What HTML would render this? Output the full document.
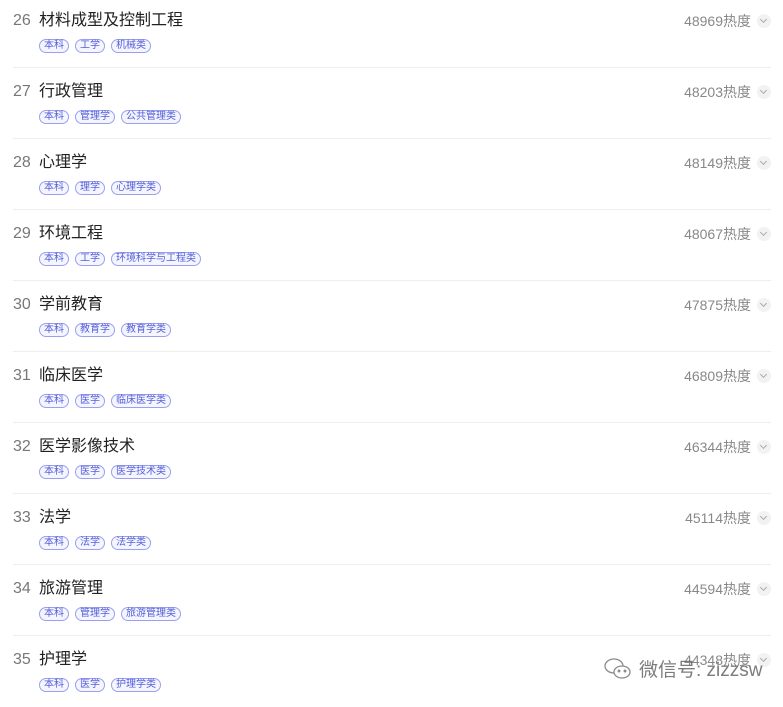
<!DOCTYPE html><html><head><meta charset="utf-8"><style>
body{margin:0;width:783px;height:701px;background:#fff;overflow:hidden;font-family:"Liberation Sans","Noto Sans CJK SC",sans-serif;position:relative}
.row{position:absolute;left:13px;width:758px;height:68px;border-bottom:1px solid #eee;box-sizing:border-box}
.num{position:absolute;left:0;top:10px;font-size:16px;line-height:22px;color:#777}
.t{position:absolute;left:26px;top:10px;font-size:16px;line-height:22px;color:#222}
.h{position:absolute;right:20px;top:11px;font-size:14px;line-height:20px;color:#888}
.c{position:absolute;right:0;top:14px;width:14px;height:14px;border-radius:50%;background:#f2f2f2}
.c::after{content:"";position:absolute;left:4px;top:3px;width:4px;height:4px;border-right:1px solid #aaa;border-bottom:1px solid #aaa;transform:rotate(45deg)}
.tags{position:absolute;left:26px;top:39px;display:flex;gap:6px}
.tags span{font-size:10px;line-height:12px;color:#5560d8;border:1px solid #9aa0ee;background:#f4f5ff;border-radius:7px;padding:0 4px}
.wm{position:absolute;left:603px;top:655px;font-size:19px;color:#666;opacity:.85;display:flex;align-items:center;gap:6px}
</style></head><body>
<div class="row" style="top:0"><span class="num">26</span><span class="t">材料成型及控制工程</span><span class="h">48969热度</span><span class="c"></span><div class="tags"><span>本科</span><span>工学</span><span>机械类</span></div></div>
<div class="row" style="top:71px"><span class="num">27</span><span class="t">行政管理</span><span class="h">48203热度</span><span class="c"></span><div class="tags"><span>本科</span><span>管理学</span><span>公共管理类</span></div></div>
<div class="row" style="top:142px"><span class="num">28</span><span class="t">心理学</span><span class="h">48149热度</span><span class="c"></span><div class="tags"><span>本科</span><span>理学</span><span>心理学类</span></div></div>
<div class="row" style="top:213px"><span class="num">29</span><span class="t">环境工程</span><span class="h">48067热度</span><span class="c"></span><div class="tags"><span>本科</span><span>工学</span><span>环境科学与工程类</span></div></div>
<div class="row" style="top:284px"><span class="num">30</span><span class="t">学前教育</span><span class="h">47875热度</span><span class="c"></span><div class="tags"><span>本科</span><span>教育学</span><span>教育学类</span></div></div>
<div class="row" style="top:355px"><span class="num">31</span><span class="t">临床医学</span><span class="h">46809热度</span><span class="c"></span><div class="tags"><span>本科</span><span>医学</span><span>临床医学类</span></div></div>
<div class="row" style="top:426px"><span class="num">32</span><span class="t">医学影像技术</span><span class="h">46344热度</span><span class="c"></span><div class="tags"><span>本科</span><span>医学</span><span>医学技术类</span></div></div>
<div class="row" style="top:497px"><span class="num">33</span><span class="t">法学</span><span class="h">45114热度</span><span class="c"></span><div class="tags"><span>本科</span><span>法学</span><span>法学类</span></div></div>
<div class="row" style="top:568px"><span class="num">34</span><span class="t">旅游管理</span><span class="h">44594热度</span><span class="c"></span><div class="tags"><span>本科</span><span>管理学</span><span>旅游管理类</span></div></div>
<div class="row" style="top:639px;border:none"><span class="num">35</span><span class="t">护理学</span><span class="h">44348热度</span><span class="c"></span><div class="tags"><span>本科</span><span>医学</span><span>护理学类</span></div></div>
<div class="wm"><svg width="30" height="24" viewBox="0 0 30 24" fill="none" stroke="#777" stroke-width="1.3"><ellipse cx="11" cy="9" rx="9" ry="7"/><ellipse cx="19" cy="15" rx="8" ry="6" fill="#fff"/><circle cx="16" cy="14" r=".8" fill="#777"/><circle cx="22" cy="14" r=".8" fill="#777"/></svg><span>微信号: zizzsw</span></div>
</body></html>
